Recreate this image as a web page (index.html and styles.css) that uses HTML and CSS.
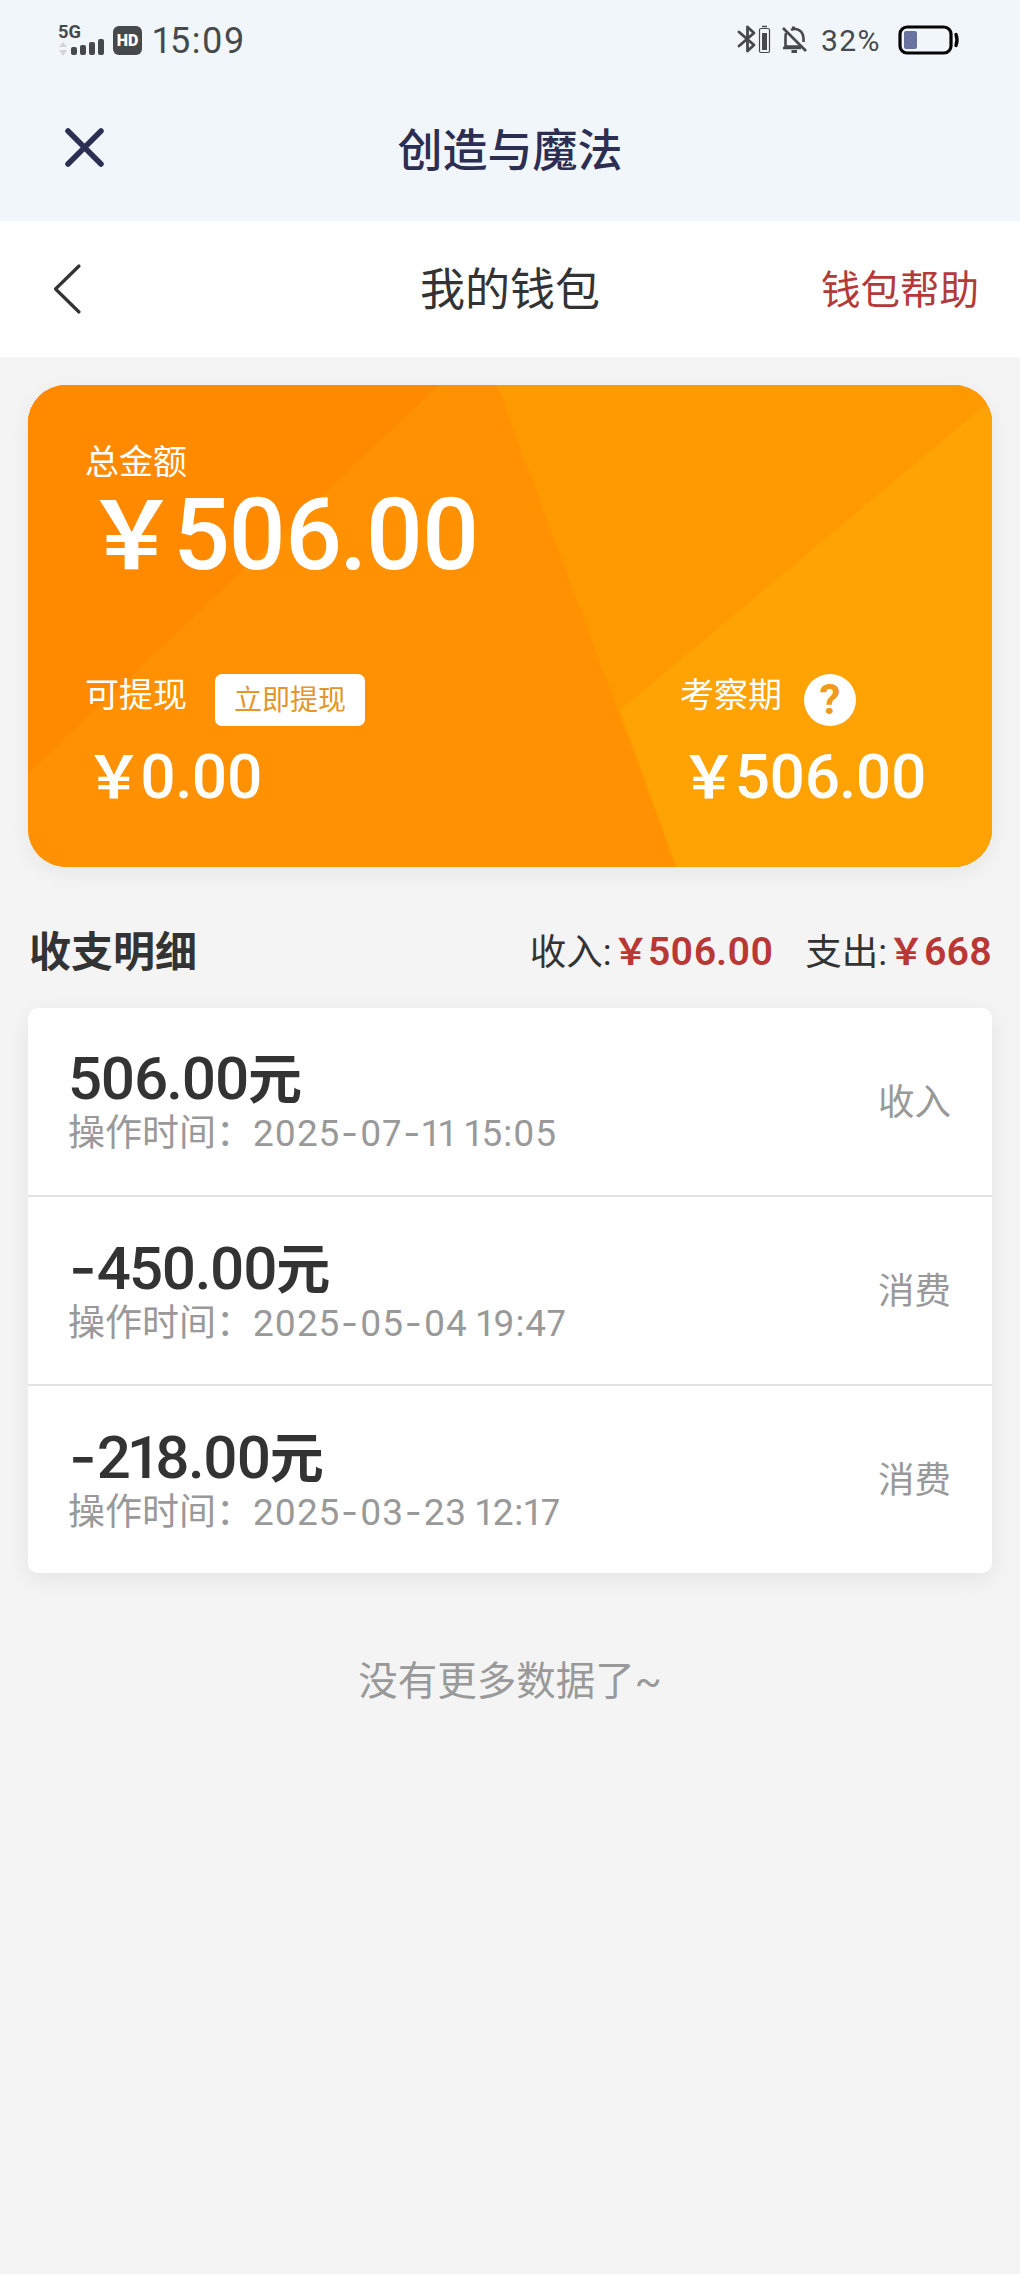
FILE: index.html
```
<!DOCTYPE html>
<html lang="zh-CN">
<head>
    <meta charset="UTF-8">
    <meta name="viewport" content="width=device-width, initial-scale=1.0">
    <title>我的钱包</title>
    <link rel="stylesheet" href="styles.css">
</head>
<body>

    <div class="status-bar">
        <div class="status-left">
            <svg class="signal" width="48" height="38" viewBox="0 -4 48 38">
                <text x="0" y="13" textLength="23" lengthAdjust="spacingAndGlyphs">5G</text>
                <path class="arrows" d="M1 22 L5 17 L9 22 Z M1 25 L5 31 L9 25 Z"/>
                <rect x="13" y="22" width="6" height="8" rx="2"/>
                <rect x="22" y="20" width="6" height="10" rx="2"/>
                <rect x="31" y="17" width="6" height="13" rx="2"/>
                <rect x="40" y="14" width="6" height="16" rx="2"/>
            </svg>
            <span class="hd">HD</span>
            <span class="time">15:09</span>
        </div>
        <div class="status-right">
            <svg width="34" height="30" viewBox="0 0 34 30" fill="none" stroke="#46494b">
                <path d="M2 7 L17 20 L10.5 26 V2 L17 8 L2 21" stroke-width="2.8" stroke-linejoin="round" stroke-linecap="round"/>
                <rect x="22.5" y="3.5" width="10" height="24" rx="1.5" stroke-width="1.2"/>
                <path d="M25 1.5 H30" stroke-width="1.5"/>
                <rect x="25" y="8" width="5" height="17" fill="#46494b" stroke="none"/>
            </svg>
            <svg class="bell" width="26" height="28" viewBox="0 0 26 28" fill="none" stroke="#46494b" stroke-width="2.6">
                <path d="M4 7 Q3.500 9 3.500 12 V20.500 H18 M1 22 H19 M9 4 Q11 2.700 14 3 Q21 4.500 21.500 12 V16"/>
                <path d="M1 2 L24 25"/>
                <path d="M11.500 0.500 V3 M9.500 25.500 H15" stroke-width="3"/>
            </svg>
            <span class="percent">32%</span>
            <svg width="62" height="30" viewBox="0 0 62 30" fill="none">
                <rect x="2" y="2" width="51" height="26" rx="7" stroke="#050505" stroke-width="3.2"/>
                <rect x="6" y="6" width="13" height="18" rx="2" fill="#68749f"/>
                <path d="M58 9.500 Q60 15 58 20.500" stroke="#050505" stroke-width="3.4" stroke-linecap="round"/>
            </svg>
        </div>
    </div>

    <div class="app-bar">
        <svg class="close" width="44" height="44" viewBox="0 0 44 44">
            <path d="M5 5 L38 38 M38 5 L5 38"/>
        </svg>
        <h1>创造与魔法</h1>
    </div>

    <div class="nav-bar">
        <svg class="back" width="30" height="52" viewBox="0 0 30 52">
            <path d="M27 3 L3.500 26 L27 49"/>
        </svg>
        <h2>我的钱包</h2>
        <a class="help">钱包帮助</a>
    </div>

    <div class="content">
        <div class="wallet-card">
            <svg class="facets" width="964" height="482" viewBox="0 0 964 482">
                <rect width="964" height="482" fill="#ff9103"/>
                <path d="M0 0 H411 L0 388 Z" fill="#ff8a00"/>
                <path d="M469 0 H964 V482 H648 Z" fill="#ff9900"/>
                <path d="M592 325 L964 14 V482 H648 Z" fill="#ffa203"/>
            </svg>
            <div class="label">总金额</div>
            <div class="amount total"><span class="yen">￥</span>506.00</div>
            <div class="balances">
                <div class="balance">
                    <div class="balance-head">
                        <span class="label">可提现</span>
                        <button class="withdraw">立即提现</button>
                    </div>
                    <div class="amount"><span class="yen">￥</span>0.00</div>
                </div>
                <div class="balance pending">
                    <div class="balance-head">
                        <span class="label">考察期</span>
                        <span class="question">?</span>
                    </div>
                    <div class="amount"><span class="yen">￥</span>506.00</div>
                </div>
            </div>
        </div>

        <div class="summary">
            <h3>收支明细</h3>
            <div class="sums">
                <div>收入<span class="colon">:</span><b><span class="yen">￥</span>506.00</b></div>
                <div>支出<span class="colon">:</span><b><span class="yen">￥</span>668</b></div>
            </div>
        </div>

        <div class="records">
            <div class="record">
                <div>
                    <div class="money">506.00<span class="unit">元</span></div>
                    <div class="date"><span class="date-label">操作时间：</span>2025<span class="dash">-</span>07<span class="dash">-</span>11 15:05</div>
                </div>
                <div class="type">收入</div>
            </div>
            <div class="record">
                <div>
                    <div class="money"><span class="dash">-</span>450.00<span class="unit">元</span></div>
                    <div class="date"><span class="date-label">操作时间：</span>2025<span class="dash">-</span>05<span class="dash">-</span>04 19:47</div>
                </div>
                <div class="type">消费</div>
            </div>
            <div class="record">
                <div>
                    <div class="money"><span class="dash">-</span>218.00<span class="unit">元</span></div>
                    <div class="date"><span class="date-label">操作时间：</span>2025<span class="dash">-</span>03<span class="dash">-</span>23 12:17</div>
                </div>
                <div class="type">消费</div>
            </div>
        </div>

        <div class="no-more">没有更多数据了~</div>
    </div>

</body>
</html>
```
FILE: styles.css
```
* {
    box-sizing: border-box;
}

body {
    margin: 0;
    min-height: 2274px;
    background-color: #f4f4f4;
    color: #333;
    font-family: Roboto, 'Noto Sans CJK SC', sans-serif;
    font-variant-numeric: proportional-nums;
}

h1, h2, h3 {
    margin: 0;
    font-weight: 400;
}

.status-bar {
    display: flex;
    justify-content: space-between;
    height: 80px;
    padding: 0 60px 0 58px;
    background-color: #f1f6fa;
    color: #46494b;
}

.status-left,
.status-right {
    display: flex;
    align-items: center;
    height: 80px;
}

.signal {
    margin-right: 7px;
    fill: #46494b;
}

.signal text {
    font-size: 18px;
    font-weight: 700;
}

.signal .arrows {
    fill: #d2d5d8;
}

.hd {
    width: 29px;
    height: 29px;
    border-radius: 6px;
    background-color: #46494b;
    color: #fff;
    font-size: 16px;
    font-weight: 900;
    line-height: 29px;
    text-align: center;
}

.time {
    margin-left: 11px;
    padding-top: 2px;
    font-size: 36px;
    letter-spacing: 1.4px;
    line-height: 78px;
}

.bell {
    margin-left: 11px;
}

.percent {
    margin: 0 17px 0 13px;
    font-size: 30px;
    letter-spacing: 1.4px;
}

.app-bar {
    position: relative;
    display: flex;
    align-items: center;
    justify-content: center;
    height: 141px;
    padding-top: 3px;
    background-color: #f1f6fa;
}

.app-bar h1 {
    color: #2c2e52;
    font-size: 45px;
    font-weight: 500;
    line-height: 60px;
}

.close {
    position: absolute;
    left: 63px;
    top: 46px;
    fill: none;
    stroke: #2c2e52;
    stroke-width: 5.5;
    stroke-linecap: round;
}

.nav-bar {
    position: relative;
    display: flex;
    align-items: center;
    justify-content: center;
    height: 136px;
    padding-top: 4px;
    background-color: #fff;
}

.nav-bar h2 {
    font-size: 45px;
    line-height: 60px;
}

.back {
    position: absolute;
    left: 52px;
    top: 42px;
    fill: none;
    stroke: #333;
    stroke-width: 3.2;
    stroke-linecap: round;
    stroke-linejoin: round;
}

.help {
    position: absolute;
    right: 41px;
    color: #b43a3a;
    font-size: 39.5px;
    line-height: 60px;
}

.content {
    padding: 28px 28px 0;
}

.wallet-card {
    position: relative;
    height: 482px;
    padding: 57px 57px 0;
    border-radius: 38px;
    overflow: hidden;
    background-color: #ff9103;
    box-shadow: 0 6px 24px rgba(0, 0, 40, 0.06);
    color: #fff;
}

.facets {
    position: absolute;
    left: 0;
    top: 0;
}

.wallet-card > div {
    position: relative;
}

.label {
    font-size: 34px;
    line-height: 40px;
}

.amount {
    margin-top: 20px;
    font-size: 62px;
    font-weight: 500;
    letter-spacing: -1.1px;
    line-height: 62px;
}

.total {
    margin-top: 3px;
    font-size: 100px;
    letter-spacing: -2.4px;
    line-height: 100px;
}

.yen {
    font-size: 0.93em;
    font-weight: 700;
    letter-spacing: -0.05em;
    line-height: 1;
}

.balances {
    display: flex;
    margin-top: 89px;
}

.balance {
    width: 595px;
}

.pending {
    width: auto;
}

.balance-head {
    display: flex;
    align-items: center;
    height: 52px;
}

.balance-head .label {
    padding-bottom: 10px;
}

.withdraw {
    width: 150px;
    height: 52px;
    margin-left: 28px;
    padding: 1px 0 0;
    border: none;
    border-radius: 7px;
    background-color: #fff;
    color: #e5962a;
    font-family: inherit;
    font-size: 28px;
    line-height: 52px;
}

.question {
    width: 52px;
    height: 52px;
    margin-left: 22px;
    border-radius: 50%;
    background-color: #fff;
    color: #ee9a1c;
    font-size: 42px;
    font-weight: 700;
    line-height: 52px;
    text-align: center;
}

.summary {
    display: flex;
    align-items: center;
    justify-content: space-between;
    height: 141px;
    padding: 30px 0 0 1px;
}

.summary h3 {
    font-size: 42px;
    font-weight: 700;
    line-height: 60px;
}

.sums {
    display: flex;
    gap: 32px;
    font-size: 36.5px;
    line-height: 60px;
}

.sums b {
    color: #b93735;
    font-size: 39px;
    font-weight: 600;
}

.sums .yen {
    letter-spacing: -0.02em;
}

.colon {
    margin-right: 1px;
}

.records {
    border-radius: 10px;
    background-color: #fff;
    box-shadow: 0 6px 24px rgba(0, 0, 0, 0.07);
}

.record {
    display: flex;
    align-items: center;
    justify-content: space-between;
    height: 189px;
    padding: 2px 41px 0 40px;
    border-bottom: 2px solid #e2e2e2;
}

.record:last-child {
    height: 187px;
    border-bottom: none;
}

.money {
    font-size: 60px;
    font-weight: 500;
    letter-spacing: -1.9px;
    line-height: 60px;
}

.money .unit {
    font-size: 54px;
    font-weight: 600;
}

.dash {
    font-family: Inter, sans-serif;
    line-height: 1;
}

.money .dash {
    margin: 0 2px 0 1px;
}

.date {
    margin-top: 1px;
    color: #999;
    font-size: 37px;
    letter-spacing: 0.8px;
    line-height: 44px;
    word-spacing: -1px;
}

.date-label {
    letter-spacing: 0;
}

.date .dash {
    margin: 0 1px;
}

.type {
    color: #999;
    font-size: 36.5px;
    line-height: 44px;
}

.no-more {
    margin-top: 82px;
    color: #999;
    font-size: 39.5px;
    line-height: 54px;
    text-align: center;
}
```
